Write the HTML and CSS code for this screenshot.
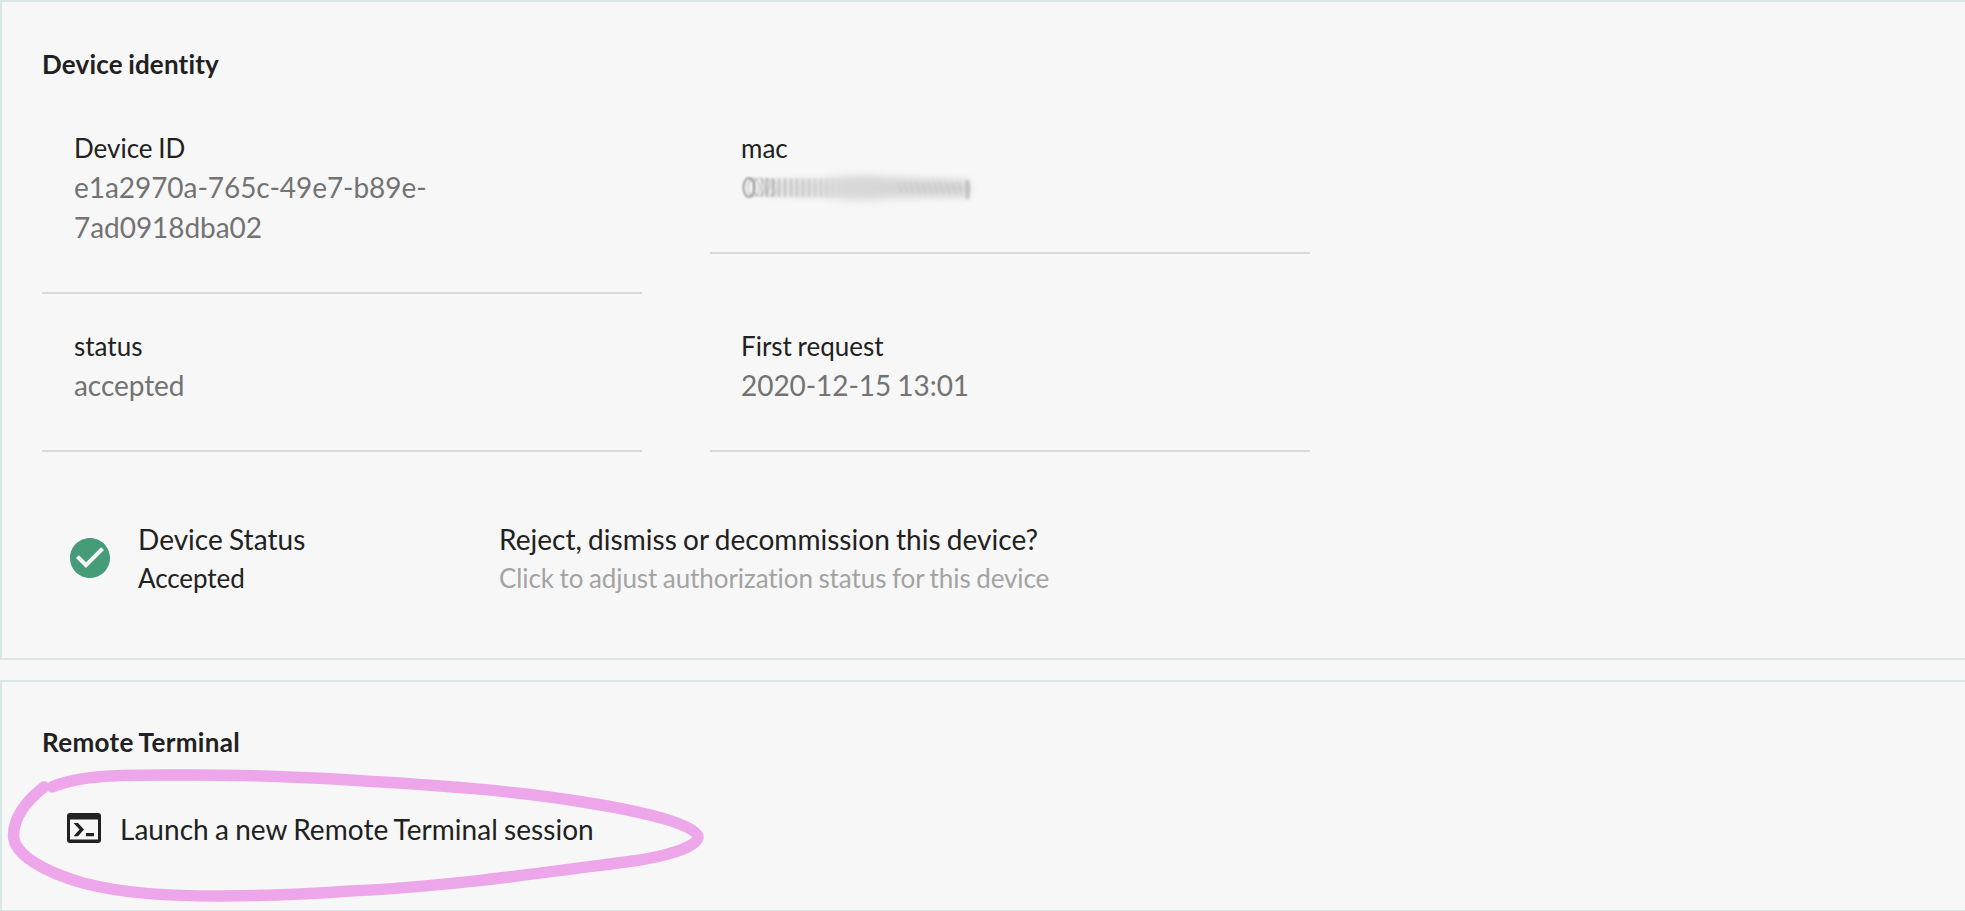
FILE: index.html
```
<!DOCTYPE html>
<html lang="en">
<head>
<meta charset="utf-8">
<title>Device identity</title>
<link rel="stylesheet" href="styles.css">
</head>
<body>
<section class="card identity">
  <h4 class="title">Device identity</h4>
  <div class="attributes">
    <div class="attribute">
      <div class="label">Device ID</div>
      <div class="value">e1a2970a-765c-49e7-b89e-<br>7ad0918dba02</div>
    </div>
    <div class="attribute right">
      <div class="label">mac</div>
      <div class="value">
        <svg class="smudge" viewBox="0 0 250 40" width="250" height="40">
          <defs>
            <filter id="soft" x="-20%" y="-60%" width="140%" height="220%"><feGaussianBlur stdDeviation="5 4"/></filter>
            <filter id="slight"><feGaussianBlur stdDeviation=".8"/></filter>
            <filter id="edge" x="-300%" y="-20%" width="700%" height="140%"><feGaussianBlur stdDeviation="1.500"/></filter>
            <linearGradient id="body"><stop offset="0" stop-color="#d9d9d9" stop-opacity=".3"/><stop offset=".3" stop-color="#dadada"/><stop offset="1" stop-color="#d0d0d0"/></linearGradient>
            <pattern id="waves" width="6" height="24" patternUnits="userSpaceOnUse"><path d="M2 0v24" stroke="#999" stroke-width="2"/></pattern>
            <pattern id="slants" width="6" height="24" patternUnits="userSpaceOnUse" patternTransform="skewX(18)"><path d="M2 0v24" stroke="#b0b0b0" stroke-width="2"/></pattern>
            <linearGradient id="hide"><stop offset="0" stop-color="#fff"/><stop offset="1" stop-color="#fff" stop-opacity="0"/></linearGradient>
            <linearGradient id="band"><stop offset="0" stop-color="#dadada"/><stop offset=".6" stop-color="#dadada"/><stop offset="1" stop-color="#dadada" stop-opacity="0"/></linearGradient>
            <mask id="tail"><rect x="18" y="5" width="84" height="30" fill="url(#hide)"/></mask>
          </defs>
          <path d="M24 13H80Q110 6 145 10L228 14V29L150 31Q110 36 80 29H24Z" fill="url(#body)" filter="url(#soft)"/>
          <path d="M20 12H110V30H20Z" fill="url(#band)" opacity=".5" filter="url(#slight)"/>
          <g mask="url(#tail)"><path d="M20 11H100V30H20Z" fill="url(#waves)" filter="url(#slight)" opacity=".6"/></g>
          <path d="M156 15L222 14V29L156 26Z" fill="url(#slants)" filter="url(#slight)" opacity=".2"/>
          <g fill="none" stroke="#808080" filter="url(#slight)">
            <ellipse cx="8" cy="20.500" rx="5.500" ry="9.500" stroke-width="1.600"/>
            <ellipse cx="12.500" cy="20.500" rx="5.500" ry="9" stroke-width="1.200" opacity=".55"/>
            <ellipse cx="18" cy="20" rx="6" ry="9" stroke-width="1.200" opacity=".5"/>
            <path d="M24 12q6 0 5 6l-4 10M30 12q6 2 2 8q6 6-3 9" opacity=".45"/>
          </g>
          <path d="M226 13q2 10 0 19" fill="none" stroke="#777" stroke-width="4" opacity=".35" filter="url(#edge)"/>
        </svg>
      </div>
    </div>
    <div class="attribute">
      <div class="label">status</div>
      <div class="value">accepted</div>
    </div>
    <div class="attribute right">
      <div class="label">First request</div>
      <div class="value">2020-12-15 13:01</div>
    </div>
  </div>
  <div class="status">
    <svg class="check" viewBox="2 2 20 20"><path d="M12 2C6.480 2 2 6.480 2 12s4.480 10 10 10 10-4.480 10-10S17.520 2 12 2zm-2 15l-5-5 1.410-1.410L10 14.170l7.590-7.590L19 8l-9 9z"/></svg>
    <div class="state">
      <div class="primary">Device Status</div>
      <div class="secondary">Accepted</div>
    </div>
    <div class="action">
      <div class="primary">Reject, dismiss or decommission this device?</div>
      <div class="secondary muted">Click to adjust authorization status for this device</div>
    </div>
  </div>
</section>
<section class="card terminal">
  <h4 class="title">Remote Terminal</h4>
  <div class="launch">
    <svg class="console" viewBox="0 0 34 30">
      <path fill-rule="evenodd" d="M3 0H31Q34 0 34 3V27Q34 30 31 30H3Q0 30 0 27V3Q0 0 3 0ZM3 6.500V26.500H31V6.500Z"/>
      <path d="M6.500 10H11L17 16.600L11 23.200H6.500L12.500 16.600ZM19 20H27V23.200H19Z"/>
    </svg>
    <span>Launch a new Remote Terminal session</span>
  </div>
  <svg class="highlight" viewBox="0 680 720 231" width="720" height="231">
    <path d="M52 787C85 773 135 775 195 775C245 775 300 777 350 780C435 785 510 790 583 802C640 811 697 824 698 837C697 848 662 857 633 861C540 873 445 887 350 891C307 894 262 896 220 896C170 896 125 894 83 883C45 872 13.500 855 13.500 835C14 817 26 801 44 787"/>
  </svg>
</section>
</body>
</html>
```
FILE: styles.css
```
* { box-sizing: border-box; }
body {
  margin: 0;
  background: #f7f7f7;
  color: #212121;
  font-family: Lato, sans-serif;
  font-variant-ligatures: none;
  word-spacing: -1px;
  overflow: hidden;
}
.card {
  position: relative;
  width: 1985px;
  border: 2px solid #d8e8e7;
  padding: 42px 40px 0;
}
.identity { height: 660px; margin-bottom: 20px; }
.terminal { height: 232px; }
.title {
  margin: 0;
  font-size: 26px;
  line-height: 40px;
  font-weight: 700;
  letter-spacing: 0.17px;
}
.attributes {
  display: grid;
  grid-template-columns: 600px 600px;
  column-gap: 68px;
  align-items: start;
  margin-top: 12px;
}
.attribute {
  padding: 33px 32px 45px;
  border-bottom: 2px solid #d9d9d9;
}
.attribute.right { padding-left: 31px; }
.label {
  font-size: 26px;
  line-height: 38px;
}
.value {
  font-size: 28px;
  line-height: 40px;
  letter-spacing: -0.05px;
  color: #737373;
}
.smudge { display: block; overflow: visible; }
.status {
  display: flex;
  align-items: center;
  margin-top: 67px;
  padding-left: 28px;
}
.check { width: 40px; height: 40px; fill: #459c77; }
.state { width: 361px; margin-left: 28px; }
.action { white-space: nowrap; }
.primary { font-size: 28px; line-height: 40px; letter-spacing: 0.03px; }
.secondary { font-size: 26px; line-height: 38px; letter-spacing: -0.08px; }
.muted { color: #a3a3a3; }
.launch {
  display: flex;
  align-items: center;
  margin-top: 47px;
  padding-left: 25px;
  gap: 19px;
  font-size: 28px;
  line-height: 40px;
  letter-spacing: 0.04px;
}
.terminal .title { margin-top: -2px; letter-spacing: 0.35px; }
.console { width: 34px; height: 30px; margin-top: -2px; fill: #212121; }
.highlight {
  position: absolute;
  left: -2px;
  top: -2px;
  fill: none;
  stroke: #eea6ea;
  stroke-width: 11.500px;
  stroke-linecap: round;
  stroke-linejoin: round;
}
```
